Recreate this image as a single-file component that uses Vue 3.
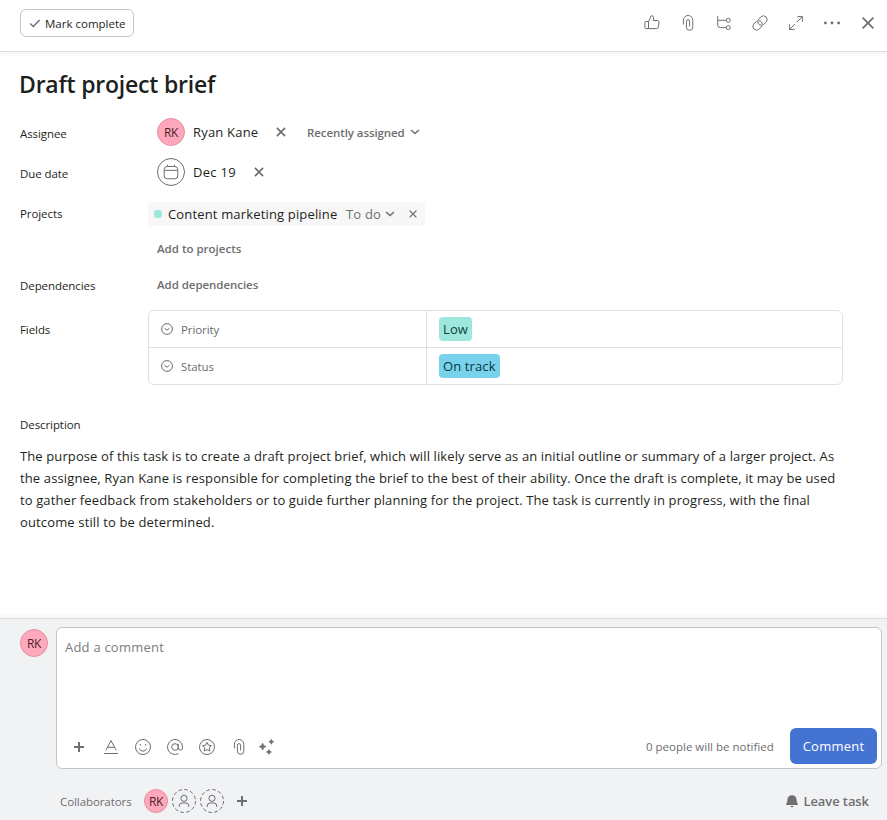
<template>
  <div class="task-pane">
    <header class="task-header">
      <button class="complete-btn">
        <svg class="complete-btn__check" viewBox="0 0 12 12"><path d="M1.2 6.4 4.3 9.4 10.6 2.9" /></svg>
        <span>Mark complete</span>
      </button>
      <div class="task-header__actions">
        <button v-for="name in headerActions" :key="name" class="icon-btn">
          <svg :class="['icon', `icon--${name}`]" viewBox="0 0 16 16">
            <path v-for="d in icons[name]" :key="d" :d="d" />
          </svg>
        </button>
      </div>
    </header>

    <main class="task-body">
      <h1 class="task-title">Draft project brief</h1>

      <div class="row">
        <div class="row__label">Assignee</div>
        <div class="row__value">
          <span class="avatar">RK</span>
          <span class="value-text value-text--name">Ryan Kane</span>
          <svg class="icon icon--remove" viewBox="0 0 16 16"><path :d="icons.close[0]" /></svg>
          <span class="section-picker">Recently assigned</span>
          <svg class="chevron" viewBox="0 0 10 6"><path d="M1 1l4 3.6L9 1" /></svg>
        </div>
      </div>

      <div class="row">
        <div class="row__label">Due date</div>
        <div class="row__value">
          <span class="date-circle">
            <svg class="icon" viewBox="0 0 16 16">
              <path v-for="d in icons.calendar" :key="d" :d="d" />
            </svg>
          </span>
          <span class="value-text value-text--date">Dec 19</span>
          <svg class="icon icon--remove" viewBox="0 0 16 16"><path :d="icons.close[0]" /></svg>
        </div>
      </div>

      <div class="row row--projects">
        <div class="row__label row__label--projects">Projects</div>
        <div class="project">
          <span class="project__dot"></span>
          <span class="project__name">Content marketing pipeline</span>
          <span class="project__section">To do</span>
          <svg class="chevron" viewBox="0 0 10 6"><path d="M1 1l4 3.6L9 1" /></svg>
          <svg class="icon project__remove" viewBox="0 0 16 16"><path :d="icons.close[0]" /></svg>
        </div>
      </div>

      <div class="row row--add">
        <div class="row__label"></div>
        <div class="add-link add-link--projects">Add to projects</div>
      </div>
      <div class="row row--deps">
        <div class="row__label row__label--deps">Dependencies</div>
        <div class="add-link add-link--deps">Add dependencies</div>
      </div>

      <div class="row row--fields">
        <div class="row__label row__label--fields">Fields</div>
        <div class="fields">
          <div v-for="field in fields" :key="field.name" class="fields__row">
            <div class="fields__name">
              <svg class="fields__icon" viewBox="0 0 12 12">
                <circle cx="6" cy="6" r="5.4" />
                <path d="M3.5 5.2 6 7.2 8.5 5.2" />
              </svg>
              <span>{{ field.name }}</span>
            </div>
            <div class="fields__value">
              <span :class="['pill', `pill--${field.type}`]">{{ field.value }}</span>
            </div>
          </div>
        </div>
      </div>

      <div class="description-label">Description</div>
      <p class="description">
        <span v-for="(line, i) in description" :key="i" :class="['description__line', `description__line--${i + 1}`]">{{ line }}</span>
      </p>
    </main>

    <footer class="task-footer">
      <div class="composer">
        <span class="avatar">RK</span>
        <div class="composer__box">
          <div class="composer__placeholder">Add a comment</div>
          <div class="composer__bar">
            <div class="composer__tools">
              <button v-for="name in commentTools" :key="name" :class="['tool-btn', `tool-btn--${name}`]">
                <svg :class="['icon', `icon--${name}`]" viewBox="0 0 16 16">
                  <path v-for="d in icons[name]" :key="d" :d="d" />
                </svg>
              </button>
            </div>
            <span class="composer__notice">0 people will be notified</span>
            <button class="comment-btn">Comment</button>
          </div>
        </div>
      </div>

      <div class="collab">
        <span class="collab__label">Collaborators</span>
        <span class="avatar avatar--small">RK</span>
        <svg v-for="n in 2" :key="n" class="collab__ghost" viewBox="0 0 24 24">
          <circle cx="12" cy="12" r="11.5" stroke-dasharray="3.6 2.42" />
          <circle cx="12" cy="9.3" r="3.1" />
          <path d="M7.2 18v-1a3 3 0 0 1 3-3h3.6a3 3 0 0 1 3 3v1" />
        </svg>
        <svg class="icon icon--plus collab__add" viewBox="0 0 16 16"><path :d="icons.plus[0]" /></svg>
        <button class="leave-btn">
          <svg class="leave-btn__bell" viewBox="0 0 12 13">
            <path d="M6 .3C3.2.3 1.5 2.2 1.4 4.7L1.2 7 .2 8.7C-.2 9.6.2 10 .9 10h10.2c.7 0 1.1-.4.7-1.3L10.8 7l-.2-2.3C10.5 2.2 8.8.3 6 .3zM4.4 11h3.2c-.3.9-.8 1.2-1.6 1.2S4.7 11.9 4.4 11z" />
          </svg>
          <span>Leave task</span>
        </button>
      </div>
    </footer>
  </div>
</template>

<script setup>
const headerActions = ['like', 'clip', 'subtask', 'link', 'expand', 'more', 'close']
const commentTools = ['plus', 'format', 'emoji', 'mention', 'star', 'clip', 'sparkle']

const fields = [
  { name: 'Priority', value: 'Low', type: 'priority' },
  { name: 'Status', value: 'On track', type: 'status' }
]

const description = [
  'The purpose of this task is to create a draft project brief, which will likely serve as an initial outline or summary of a larger project. As',
  'the assignee, Ryan Kane is responsible for completing the brief to the best of their ability. Once the draft is complete, it may be used',
  'to gather feedback from stakeholders or to guide further planning for the project. The task is currently in progress, with the final',
  'outcome still to be determined.'
]

const icons = {
  like: [
    'M4.5 6.5H1.7Q.9 6.5.9 7.3V12.7Q.9 13.6 1.8 13.6H4.5Z',
    'M4.5 6.5 6.4 2.9V1.9Q6.6.7 7.8.7 9.5.8 9.5 2.8V5.5H13.2Q15.2 5.6 15 7.4L14.4 11.9Q14.2 13.6 12.5 13.6H4.5'
  ],
  clip: ['M3.4 9.5V5.2a4.7 4.7 0 0 1 9.4 0v6.9a3.2 3.2 0 0 1-6.4 0V6.2a1.6 1.6 0 0 1 3.2 0v5.3'],
  subtask: [
    'M1.7.9V10a2.6 2.6 0 0 0 2.6 2.6h6M1.7 5.3h8.6',
    'M10.3 5.3a2 2 0 1 0 4 0a2 2 0 1 0-4 0M10.3 12.6a2 2 0 1 0 4 0a2 2 0 1 0-4 0'
  ],
  link: [
    'M9.3 10.3a3.7 3.7 0 0 1-2.6-6.2l2.4-2.4a3.7 3.7 0 0 1 5.2 5.2l-3 3',
    'M6.7 5.7a3.7 3.7 0 0 1 2.6 6.2l-2.4 2.4a3.7 3.7 0 0 1-5.2-5.2l3-3'
  ],
  expand: ['M9.3 1.6h5.1v5.1M14.3 1.7 9 7M1.6 9.3v5.1h5.1M1.7 14.3 7 9'],
  more: ['M1.4 8h.01M8 8h.01M14.6 8h.01'],
  close: ['M2.6 2.6l10.8 10.8M13.4 2.6 2.6 13.4'],
  calendar: [
    'M4.2 2.5h7.6a3 3 0 0 1 3 3v6.3a3 3 0 0 1-3 3H4.2a3 3 0 0 1-3-3V5.5a3 3 0 0 1 3-3z',
    'M1.2 6.3h13.6M4.5.8v1.7M11.5.8v1.7'
  ],
  plus: ['M8 3v10M3 8h10'],
  format: ['M2.8 11.3 8 1.6l5.2 9.7M4.7 8.3h6.6M1 14.5h14'],
  emoji: [
    'M.5 8a7.5 7.5 0 1 0 15 0a7.5 7.5 0 1 0-15 0',
    'M4.3 9.5a3.9 3.9 0 0 0 7.4 0',
    'M5.3 5v1.6M10.7 5v1.6'
  ],
  mention: [
    'M4.7 8a3.3 3.3 0 1 0 6.6 0a3.3 3.3 0 1 0-6.6 0',
    'M11.3 4.8V9a2.1 2.1 0 0 0 4.2 0V8A7.5 7.5 0 1 0 11.5 14.6'
  ],
  star: [
    'M.5 8a7.5 7.5 0 1 0 15 0a7.5 7.5 0 1 0-15 0',
    'M8 3.4l1.4 2.8 3.1.5-2.2 2.2.5 3.1L8 10.6 5.2 12l.5-3.1-2.2-2.2 3.1-.5z'
  ],
  sparkle: [
    'M3.6 4.2q.5 2.9 3.4 3.4-2.9.5-3.4 3.4-.5-2.9-3.4-3.4 2.9-.5 3.4-3.4z',
    'M12.3.4q.4 2 2.4 2.4-2 .4-2.4 2.4-.4-2-2.4-2.4 2-.4 2.4-2.4z',
    'M9.9 10.6q.4 2 2.4 2.4-2 .4-2.4 2.4-.4-2-2.4-2.4 2-.4 2.4-2.4z'
  ]
}
</script>

<style>
body {
  margin: 0;
  background: #fff;
}
</style>

<style scoped>
.task-pane {
  display: flex;
  flex-direction: column;
  width: 887px;
  height: 820px;
  overflow: hidden;
  background: #fff;
  color: #1e1f21;
  font-family: 'Open Sans', 'Noto Sans', sans-serif;
  font-size: 11.5px;
  white-space: nowrap;
}
.task-pane * {
  box-sizing: border-box;
}

button {
  padding: 0;
  border: none;
  background: transparent;
  font-family: inherit;
  color: inherit;
}

.icon {
  display: block;
  width: 16px;
  height: 16px;
  flex: none;
  fill: none;
  stroke: #6d6e6f;
  stroke-width: 1;
  overflow: visible;
}
.icon--more {
  stroke-width: 2.8;
  stroke-linecap: round;
}
.icon--close {
  stroke-width: 1.7;
}
.icon--plus {
  stroke-width: 2;
}
.icon--sparkle {
  fill: #6d6e6f;
  stroke-width: 0.8;
}
.icon--remove {
  width: 12px;
  height: 12px;
  stroke-width: 2.2;
}

.chevron {
  width: 10px;
  height: 6px;
  flex: none;
  fill: none;
  stroke: #6d6e6f;
  stroke-width: 1.5;
}

.avatar {
  display: flex;
  align-items: center;
  justify-content: center;
  flex: none;
  width: 28px;
  height: 28px;
  border: 1px solid #e2929f;
  border-radius: 50%;
  background: #ffa8bc;
  color: #4f1e2b;
  font-size: 12px;
  letter-spacing: -0.4px;
}
.avatar--small {
  width: 24px;
  height: 24px;
}

/* header */
.task-header {
  display: flex;
  align-items: flex-start;
  justify-content: space-between;
  flex: none;
  height: 52px;
  padding: 5px 1px 0 20px;
  border-bottom: 1px solid #dcdddd;
  box-shadow: 0 2px 4px rgba(0, 0, 0, 0.05);
}
.complete-btn {
  display: flex;
  align-items: center;
  width: 114px;
  height: 28px;
  margin-top: 4px;
  padding-left: 8px;
  border: 1px solid #c4c5c6;
  border-radius: 6px;
  font-size: 11.5px;
}
.complete-btn__check {
  width: 12px;
  height: 12px;
  margin-right: 4px;
  fill: none;
  stroke: #6d6e6f;
  stroke-width: 1.4;
}
.task-header__actions {
  display: flex;
}
.icon-btn {
  display: flex;
  align-items: center;
  justify-content: center;
  width: 36px;
  height: 36px;
}

/* body */
.task-body {
  flex: 1;
  padding-left: 20px;
}
.task-title {
  height: 60px;
  margin: 0 0 0 -1px;
  padding-top: 16px;
  font-size: 23px;
  font-weight: 600;
  line-height: 32px;
  letter-spacing: -0.22px;
}
.row {
  display: flex;
  align-items: center;
  height: 40px;
}
.row__label {
  width: 128px;
  flex: none;
  padding-top: 2px;
  letter-spacing: -0.08px;
}
.row__value {
  display: flex;
  align-items: center;
  padding-left: 9px;
}
.value-text {
  flex: none;
  margin: 0 17px 0 8px;
  font-size: 13px;
  letter-spacing: 0.2px;
}
.value-text--name {
  width: 65px;
}
.value-text--date {
  width: 43px;
  letter-spacing: 0.3px;
}
.date-circle {
  display: flex;
  align-items: center;
  justify-content: center;
  width: 28px;
  height: 28px;
  border: 1px solid #6d6e6f;
  border-radius: 50%;
}
.section-picker {
  width: 98px;
  margin: 0 5px 0 20px;
  color: #6d6e6f;
  font-weight: 600;
  letter-spacing: -0.08px;
}
.row--projects {
  align-items: flex-start;
  padding-top: 10px;
  height: 45px;
}
.row__label--projects {
  padding-top: 4px;
}
.project {
  display: flex;
  align-items: center;
  width: 277px;
  height: 24px;
  padding-left: 6px;
  border-radius: 4px;
  background: #f7f7f7;
  font-size: 13px;
}
.project__dot {
  width: 8px;
  height: 8px;
  margin-right: 6px;
  border-radius: 3px;
  background: #9ee7dc;
}
.project__name {
  width: 169px;
  letter-spacing: 0.16px;
}
.project__section {
  width: 34px;
  margin: 0 5px 0 9px;
  color: #6d6e6f;
  letter-spacing: 0.2px;
}
.project__remove {
  width: 10px;
  height: 10px;
  margin-left: 13px;
  stroke-width: 2.2;
}
.row--add {
  height: 24px;
}
.row--deps {
  height: 48px;
}
.row__label--deps {
  padding-top: 0;
}
.add-link {
  padding-left: 9px;
  color: #6d6e6f;
  font-weight: 600;
}
.add-link--projects {
  padding-bottom: 2px;
}
.add-link--deps {
  padding-bottom: 1px;
  letter-spacing: -0.05px;
}
.row--fields {
  align-items: flex-start;
  height: 75px;
  margin-top: 1px;
}
.row__label--fields {
  padding-top: 12px;
}
.fields {
  width: 695px;
  height: 75px;
  border: 1px solid #e0e0e0;
  border-radius: 6px;
}
.fields__row {
  display: flex;
  height: 36px;
}
.fields__row + .fields__row {
  height: 37px;
  border-top: 1px solid #e0e0e0;
}
.fields__name {
  display: flex;
  align-items: center;
  width: 278px;
  padding-left: 12px;
  border-right: 1px solid #e0e0e0;
  color: #6d6e6f;
  letter-spacing: -0.1px;
}
.fields__icon {
  width: 12px;
  height: 12px;
  margin-right: 8px;
  fill: none;
  stroke: #6d6e6f;
}
.fields__value {
  display: flex;
  align-items: center;
  padding-left: 12px;
}
.pill {
  display: flex;
  align-items: center;
  height: 24px;
  padding-left: 4px;
  border-radius: 4px;
  font-size: 13px;
  letter-spacing: 0.12px;
}
.pill--priority {
  width: 33px;
  background: #9ee7dc;
  color: #0d3f3a;
}
.pill--status {
  width: 61px;
  background: #78d2eb;
  color: #0b3644;
}
.description-label {
  margin-top: 31px;
  line-height: 18px;
  letter-spacing: -0.08px;
}
.description {
  margin: 11px 0 0;
  font-size: 13px;
  line-height: 22px;
}
.description__line {
  display: block;
  letter-spacing: 0.11px;
}
.description__line--2 {
  letter-spacing: 0.13px;
}
.description__line--3 {
  letter-spacing: 0.115px;
}
.description__line--4 {
  letter-spacing: 0.14px;
}

/* footer */
.task-footer {
  flex: none;
  height: 202px;
  padding: 8px 5px 0 20px;
  border-top: 1px solid #dcdddd;
  background: #f1f2f4;
  box-shadow: 0 -2px 4px rgba(0, 0, 0, 0.05);
}
.composer {
  display: flex;
  gap: 8px;
}
.composer > .avatar {
  margin-top: 2px;
}
.composer__box {
  display: flex;
  flex-direction: column;
  justify-content: space-between;
  width: 826px;
  height: 142px;
  padding: 9px 4px 4px 8px;
  border: 1px solid #c4c5c6;
  border-radius: 6px;
  background: #fff;
}
.composer__placeholder {
  color: #7b7c7e;
  font-size: 13px;
  line-height: 20px;
  letter-spacing: 0.22px;
}
.composer__bar {
  display: flex;
  align-items: center;
  height: 36px;
}
.composer__tools {
  display: flex;
  flex: 1;
  margin-left: -2px;
  padding-top: 2px;
}
.tool-btn {
  display: flex;
  align-items: center;
  justify-content: center;
  width: 32px;
  height: 28px;
}
.tool-btn--sparkle {
  width: 24px;
}
.composer__notice {
  width: 128px;
  margin-right: 16px;
  color: #6d6e6f;
}
.comment-btn {
  width: 87px;
  height: 36px;
  border-radius: 6px;
  background: #4573d2;
  color: #fff;
  font-size: 13px;
  letter-spacing: 0.25px;
}
.collab {
  display: flex;
  align-items: center;
  height: 28px;
  margin-top: 18px;
  padding: 0 13px 0 40px;
  color: #6d6e6f;
}
.collab__label {
  width: 72px;
  margin-right: 12px;
  letter-spacing: -0.08px;
}
.collab__ghost {
  width: 24px;
  height: 24px;
  margin-left: 4px;
  fill: none;
  stroke: #6d6e6f;
}
.collab__add {
  margin-left: 10px;
}
.leave-btn {
  display: flex;
  align-items: center;
  margin-left: auto;
  font-size: 13px;
  font-weight: 600;
  letter-spacing: -0.08px;
}
.leave-btn__bell {
  width: 12px;
  height: 13px;
  margin-right: 5px;
  fill: #6d6e6f;
}
</style>
